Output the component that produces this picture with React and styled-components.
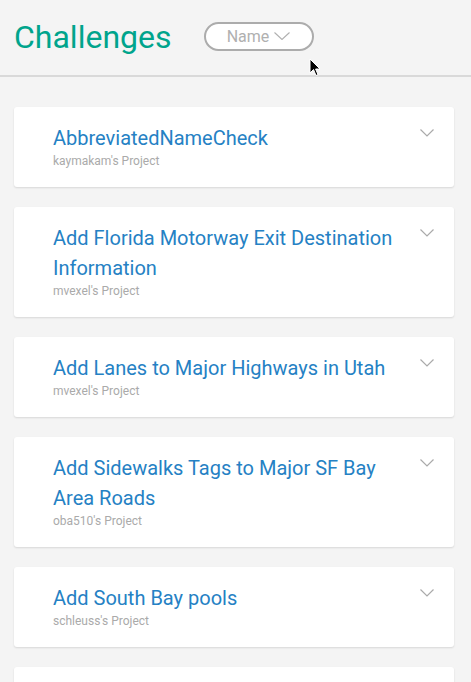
import React from 'react';
import styled, { createGlobalStyle } from 'styled-components';

const GlobalStyle = createGlobalStyle`
  html, body {
    margin: 0;
    padding: 0;
    background: #f4f4f4;
    font-family: Roboto, "Liberation Sans", sans-serif;
  }
`;

const Page = styled.div`
  position: relative;
  width: 471px;
  height: 682px;
  overflow: hidden;
  background: #f4f4f4;
`;

const Header = styled.div`
  display: flex;
  align-items: center;
  height: 77px;
  padding-left: 14px;
  border-bottom: 2px solid #d9d9d9;
  box-sizing: border-box;
`;

const Title = styled.h1`
  margin: 0 32px 2px 0;
  font-size: 32px;
  font-weight: 400;
  color: #00a48c;
  line-height: 1;
`;

const SortButton = styled.div`
  display: flex;
  align-items: center;
  justify-content: center;
  gap: 5px;
  width: 110px;
  height: 29px;
  box-sizing: border-box;
  margin-bottom: 3px;
  border: 2px solid #acacac;
  border-radius: 15px;
  background: #fff;
  color: #b0b0b0;
  font-size: 16px;
`;

const List = styled.div`
  display: flex;
  flex-direction: column;
  gap: 20px;
  padding: 30px 17px 0 14px;
`;

const Card = styled.div`
  display: flex;
  justify-content: space-between;
  min-height: 46px;
  padding: 16px 20px 18px 39px;
  background: #fff;
  border-radius: 3px;
  box-shadow: 0 1px 2px rgba(0, 0, 0, 0.12);
`;

const CardBody = styled.div`
  display: flex;
  flex-direction: column;
  max-width: 350px;
`;

const CardTitle = styled.div`
  font-size: 20px;
  line-height: 30px;
  color: #2581c4;
`;

const Owner = styled.div`
  font-size: 12px;
  line-height: 16px;
  color: #aaa;
`;

const Toggle = styled.svg`
  flex: none;
  margin-top: 6px;
`;

const Cursor = styled.svg`
  position: absolute;
  left: 309px;
  top: 58px;
`;

const Chevron = () => (
  <Toggle width="14" height="8" viewBox="0 0 14 8">
    <polyline points="0.5,0.5 7,7 13.5,0.5" fill="none" stroke="#aaa" strokeWidth="1.2" />
  </Toggle>
);

const challenges = [
  { name: 'AbbreviatedNameCheck', owner: "kaymakam's Project" },
  { name: 'Add Florida Motorway Exit Destination Information', owner: "mvexel's Project" },
  { name: 'Add Lanes to Major Highways in Utah', owner: "mvexel's Project" },
  { name: 'Add Sidewalks Tags to Major SF Bay Area Roads', owner: "oba510's Project" },
  { name: 'Add South Bay pools', owner: "schleuss's Project" },
];

function App() {
  return (
    <Page>
      <GlobalStyle />
      <Header>
        <Title>Challenges</Title>
        <SortButton>
          Name
          <svg width="16" height="8" viewBox="0 0 16 8">
            <polyline points="0.5,0.5 8,7.5 15.5,0.5" fill="none" stroke="#b0b0b0" strokeWidth="1.1" />
          </svg>
        </SortButton>
      </Header>
      <List>
        {challenges.map((c) => (
          <Card key={c.name}>
            <CardBody>
              <CardTitle>{c.name}</CardTitle>
              <Owner>{c.owner}</Owner>
            </CardBody>
            <Chevron />
          </Card>
        ))}
        {/* next card, scrolled below the fold */}
        <Card />
      </List>
      <Cursor width="12" height="19" viewBox="0 0 12 19">
        <path d="M1 1 L1 15 L4.5 11.5 L7 17.5 L9 16.6 L6.6 11 L11 11 Z" fill="#000" stroke="#fff" strokeWidth="1" />
      </Cursor>
    </Page>
  );
}

export default App;
